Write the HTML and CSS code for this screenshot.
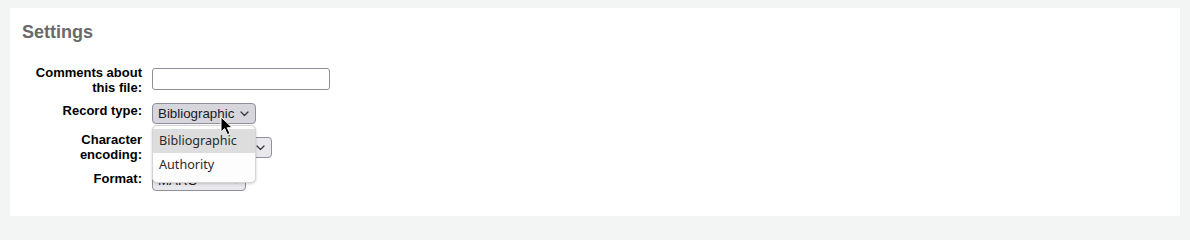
FILE: index.html
```html
<!DOCTYPE html>
<html lang="en">
<head>
<meta charset="utf-8">
<title>Settings</title>
<link rel="stylesheet" href="styles.css">
</head>
<body>
<main class="panel">
  <h3 class="title">Settings</h3>
  <ol class="rows">
    <li class="row row-comments">
      <label class="lbl">Comments about this file:</label>
      <input class="text" type="text">
    </li>
    <li class="row row-type">
      <label class="lbl lbl-type">Record type:</label>
      <div class="ctl">
        <div class="select select-type is-hover">
          <span class="sel-text">Bibliographic</span>
          <svg class="chev" width="9" height="6" viewBox="0 0 9 6"><path d="M1 1 L4.5 4.5 L8 1" fill="none" stroke="#3a3a3a" stroke-width="1.3" stroke-linecap="round" stroke-linejoin="round"/></svg>
        </div>
        <ul class="popup">
          <li class="opt is-active">Bibliographic</li>
          <li class="opt">Authority</li>
        </ul>
        <svg class="cursor" width="15" height="20" viewBox="0 0 15 20"><path d="M1 1 V16 L4.6 12.6 L7.4 18.6 L10 17.5 L7.3 11.7 H12.2 Z" fill="#000" stroke="#fff" stroke-width="1" stroke-linejoin="round"/></svg>
      </div>
    </li>
    <li class="row row-enc">
      <label class="lbl">Character encoding:</label>
      <div class="select select-enc">
        <span class="sel-text">MARC 8</span>
        <svg class="chev" width="9" height="6" viewBox="0 0 9 6"><path d="M1 1 L4.5 4.5 L8 1" fill="none" stroke="#3a3a3a" stroke-width="1.3" stroke-linecap="round" stroke-linejoin="round"/></svg>
      </div>
    </li>
    <li class="row row-format">
      <label class="lbl">Format:</label>
      <div class="select select-format">
        <span class="sel-text">MARC</span>
        <svg class="chev" width="9" height="6" viewBox="0 0 9 6"><path d="M1 1 L4.5 4.5 L8 1" fill="none" stroke="#3a3a3a" stroke-width="1.3" stroke-linecap="round" stroke-linejoin="round"/></svg>
      </div>
    </li>
  </ol>
</main>
</body>
</html>
```
FILE: styles.css
```css
html, body {
  margin: 0;
  padding: 0;
  overflow: hidden;
}
body {
  box-sizing: border-box;
  height: 224px;
  background: #f3f4f4;
  font-family: "Liberation Sans", Arial, sans-serif;
  color: #000;
  padding: 8px 10px;
}
.panel {
  box-sizing: border-box;
  height: 208px;
  background: #fff;
  padding: 14px 12px;
}
.title {
  margin: 0;
  font-size: 18px;
  line-height: 20px;
  font-weight: bold;
  color: #696969;
}
.rows {
  list-style: none;
  margin: 23px 0 0;
  padding: 0;
}
.row {
  display: flex;
  align-items: flex-start;
}
.lbl {
  width: 120px;
  margin-right: 10px;
  text-align: right;
  font-size: 13px;
  line-height: 15px;
  font-weight: bold;
  flex: none;
}
.lbl-type { margin-top: 8px; }
.row-comments { height: 30px; }
.row-type { height: 37px; }
.row-enc { height: 39px; }
.row-format { height: 21px; }

.text {
  box-sizing: border-box;
  width: 178px;
  height: 22px;
  margin: 3px 0 0;
  border: 1px solid #8f8f9d;
  border-radius: 3px;
  background: #fff;
  padding: 0 4px;
}
.ctl {
  position: relative;
  margin-top: 8px;
}
.select {
  box-sizing: border-box;
  height: 21px;
  border: 1px solid #8f8f9d;
  border-radius: 4px;
  background: #e9e9ed;
  display: flex;
  align-items: center;
  justify-content: space-between;
  padding: 0 6px 0 5px;
  font-size: 13.33px;
  color: #1b1b1b;
}
.sel-text {
  line-height: 19px;
  white-space: nowrap;
}
.chev {
  flex: none;
  display: block;
}
.select-type { width: 104px; }
.select-type.is-hover { background: #d6d6dc; }
.select-enc { width: 120px; margin-top: 5px; }
.select-format { width: 94px; margin-top: -1px; padding-right: 4px; }

.popup {
  position: absolute;
  z-index: 5;
  left: 0;
  top: 22px;
  box-sizing: border-box;
  width: 104px;
  height: 58px;
  margin: 0;
  padding: 3px 0 5px;
  list-style: none;
  background: #fdfdfd;
  border: 1px solid #d4d4d4;
  border-radius: 5px;
  box-shadow: 0 1px 3px rgba(0, 0, 0, 0.18);
  font-family: "Noto Sans", "DejaVu Sans", sans-serif;
  font-size: 12.6px;
  color: #262b2e;
}
.opt {
  height: 24px;
  line-height: 24px;
  padding-left: 6px;
  white-space: nowrap;
}
.opt.is-active {
  background: #dddddd;
}
.cursor {
  position: absolute;
  z-index: 6;
  left: 68px;
  top: 13px;
  display: block;
}
```
